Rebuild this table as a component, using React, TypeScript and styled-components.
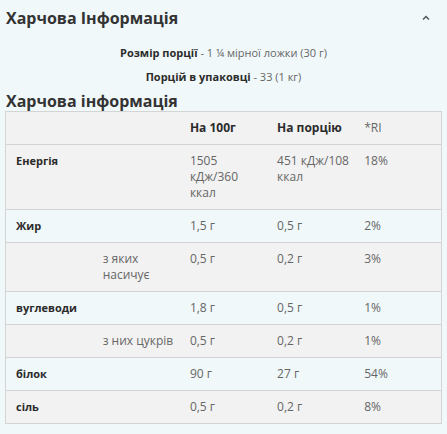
import React from "react";
import styled, { createGlobalStyle } from "styled-components";

const Global = createGlobalStyle`
  html, body { margin: 0; padding: 0; background: #f0f8fa; }
  body { font-family: "Open Sans", "Noto Sans", sans-serif; color: #2b2b2b; }
`;

const Page = styled.div`
  width: 447px;
  height: 434px;
  padding: 0 5px;
  box-sizing: border-box;
  background: #f0f8fa;
`;

const TopBar = styled.div`
  display: flex;
  align-items: center;
  justify-content: space-between;
  height: 38px;
  padding: 0 12px 2px 1px;
  box-sizing: border-box;
`;

const Title = styled.h2`
  margin: 0;
  font-size: 16px;
  font-weight: 700;
  color: #333;
  line-height: 22px;
`;

const Chevron = styled.svg`
  width: 8px;
  height: 8px;
  display: block;
`;

const Serving = styled.div`
  display: flex;
  flex-direction: column;
  align-items: center;
  gap: 8px;
  padding-top: 7px;
  font-size: 11px;
  line-height: 16px;
  color: #666;
`;

const ServingLine = styled.p`
  margin: 0;
  b { color: #2b2b2b; font-weight: 700; }
`;

const SubTitle = styled.h3`
  margin: 6px 0 0 1px;
  font-size: 16px;
  font-weight: 700;
  color: #333;
  line-height: 20px;
`;

const Table = styled.table`
  width: 437px;
  border-collapse: collapse;
  table-layout: fixed;
  border: 1px solid #d4d4d4;
  font-size: 12px;
  line-height: 16px;
`;

const Row = styled.tr<{ $shade: boolean }>`
  background: ${(p) => (p.$shade ? "#f2f2f2" : "#f0f8fa")};
  border-bottom: 1px solid #d4d4d4;
`;

const Cell = styled.td<{ $kind?: "label" | "head" | "sub" | "value" }>`
  padding: 8px 1px 8px 10px;
  vertical-align: top;
  font-weight: ${(p) => (p.$kind === "label" || p.$kind === "head" ? 700 : 400)};
  color: ${(p) => (p.$kind === "label" || p.$kind === "head" ? "#2b2b2b" : "#666")};
  font-size: ${(p) => (p.$kind === "label" ? "11px" : "12px")};
`;

const rows: { label?: string; sub?: string; a: string; b: string; c: string }[] = [
  { label: "Енергія", a: "1505 кДж/360 ккал", b: "451 кДж/108 ккал", c: "18%" },
  { label: "Жир", a: "1,5 г", b: "0,5 г", c: "2%" },
  { sub: "з яких насичує", a: "0,5 г", b: "0,2 г", c: "3%" },
  { label: "вуглеводи", a: "1,8 г", b: "0,5 г", c: "1%" },
  { sub: "з них цукрів", a: "0,5 г", b: "0,2 г", c: "1%" },
  { label: "білок", a: "90 г", b: "27 г", c: "54%" },
  { label: "сіль", a: "0,5 г", b: "0,2 г", c: "8%" },
];

export default function App() {
  return (
    <Page>
      <Global />
      <TopBar>
        <Title>Харчова Інформація</Title>
        <Chevron viewBox="0 0 8 8">
          <path d="M1 5.5 L4 2.5 L7 5.5" fill="none" stroke="#555" strokeWidth="1.5" />
        </Chevron>
      </TopBar>
      <Serving>
        <ServingLine>
          <b>Розмір порції</b> - 1 ¼ мірної ложки (30 г)
        </ServingLine>
        <ServingLine>
          <b>Порцій в упаковці</b> - 33 (1 кг)
        </ServingLine>
      </Serving>
      <SubTitle>Харчова інформація</SubTitle>
      <Table>
        <tbody>
          <Row $shade={true}>
            <Cell />
            <Cell />
            <Cell $kind="head">На 100г</Cell>
            <Cell $kind="head">На порцію</Cell>
            <Cell $kind="value">*RI</Cell>
          </Row>
          {rows.map((r, i) => (
            <Row key={i} $shade={i % 2 === 0}>
              <Cell $kind="label">{r.label}</Cell>
              <Cell $kind="value">{r.sub}</Cell>
              <Cell $kind="value">{r.a}</Cell>
              <Cell $kind="value">{r.b}</Cell>
              <Cell $kind="value">{r.c}</Cell>
            </Row>
          ))}
        </tbody>
      </Table>
    </Page>
  );
}
